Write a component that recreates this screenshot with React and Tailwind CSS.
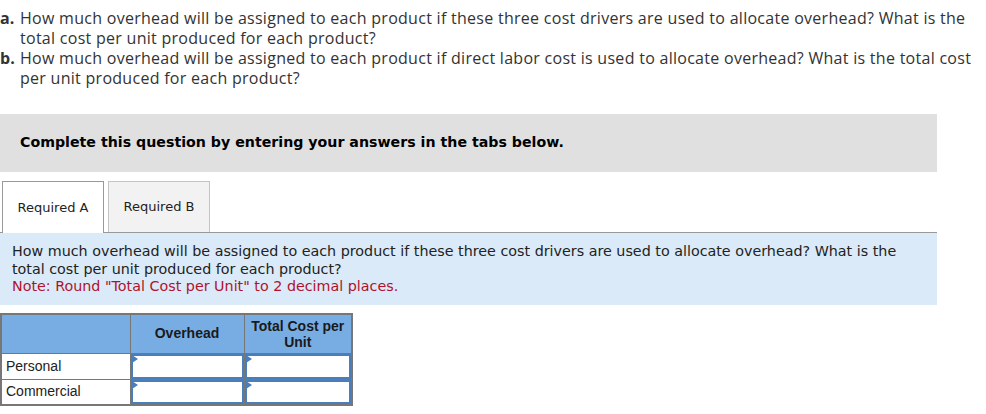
import React from 'react';

const verdana = { fontFamily: '"DejaVu Sans", Verdana, sans-serif' };

function InputCell() {
    return (
        <td className="border border-[#777] p-0 h-[26px]">
            <div className="relative h-full border-2 border-[#4a7ebb] bg-white">
                <span className="absolute -left-[1px] -top-[1px] w-0 h-0 border-y-[4px] border-y-transparent border-l-[6px] border-l-[#4a7ebb]"></span>
            </div>
        </td>
    );
}

export default function App() {
    const rows = ['Personal', 'Commercial'];

    return (
        <div className="w-[986px] h-[414px] bg-white text-[#222] overflow-hidden">
            {/* Question text */}
            <div className="pt-[8px] text-[16px] tracking-[0.28px] leading-[20px] text-[#333] whitespace-nowrap" style={{ fontFamily: '"Open Sans", Lato, sans-serif' }}>
                <div className="flex">
                    <span className="w-[20px] shrink-0 font-bold tracking-normal">a.</span>
                    <span>How much overhead will be assigned to each product if these three cost drivers are used to allocate overhead? What is the<br />total cost per unit produced for each product?</span>
                </div>
                <div className="flex">
                    <span className="w-[20px] shrink-0 font-bold tracking-normal">b.</span>
                    <span>How much overhead will be assigned to each product if direct labor cost is used to allocate overhead? What is the total cost<br />per unit produced for each product?</span>
                </div>
            </div>

            {/* Instruction bar */}
            <div className="mt-[26px] w-[937px] h-[58px] bg-[#e0e0e0] flex items-center pl-[20px]">
                <span className="font-bold text-[14.2px] text-black" style={verdana}>Complete this question by entering your answers in the tabs below.</span>
            </div>

            {/* Tabs */}
            <div className="mt-[9px] w-[937px] flex items-end border-b border-[#999]" style={verdana}>
                <div className="ml-[2px] w-[102px] h-[52px] -mb-[1px] border border-b-0 border-[#999] bg-white flex items-center justify-center text-[13px] text-[#222]">
                    Required A
                </div>
                <div className="ml-[4px] w-[102px] h-[51px] border border-b-0 border-[#c4c4c4] bg-[#f2f2f2] flex items-center justify-center text-[13px] text-[#222]">
                    Required B
                </div>
            </div>

            {/* Prompt panel */}
            <div className="w-[937px] h-[72px] bg-[#dbeaf8] px-[12px] pt-[10px] text-[14.3px] leading-[17.5px] text-[#222] whitespace-nowrap" style={verdana}>
                <p>How much overhead will be assigned to each product if these three cost drivers are used to allocate overhead? What is the<br />total cost per unit produced for each product?</p>
                <p className="text-[#b0122b]">Note: Round "Total Cost per Unit" to 2 decimal places.</p>
            </div>

            {/* Answer table */}
            <table className="mt-[8px] border-collapse border-2 border-[#777] text-[14px]" style={{ fontFamily: '"Liberation Sans", Arial, sans-serif' }}>
                <thead>
                    <tr className="bg-[#78ade4] h-[39px]">
                        <th className="w-[129px] border border-[#777]"></th>
                        <th className="w-[114px] border border-[#777] text-[14px] font-bold text-[#1a1a1a]">Overhead</th>
                        <th className="w-[108px] border border-[#777] text-[14px] leading-[16px] font-bold text-[#1a1a1a]">Total Cost per<br />Unit</th>
                    </tr>
                </thead>
                <tbody>
                    {rows.map((r) => (
                        <tr key={r} className="h-[25px]">
                            <td className="border border-[#777] pl-[4px] text-[#222]">{r}</td>
                            <InputCell />
                            <InputCell />
                        </tr>
                    ))}
                </tbody>
            </table>
        </div>
    );
}
